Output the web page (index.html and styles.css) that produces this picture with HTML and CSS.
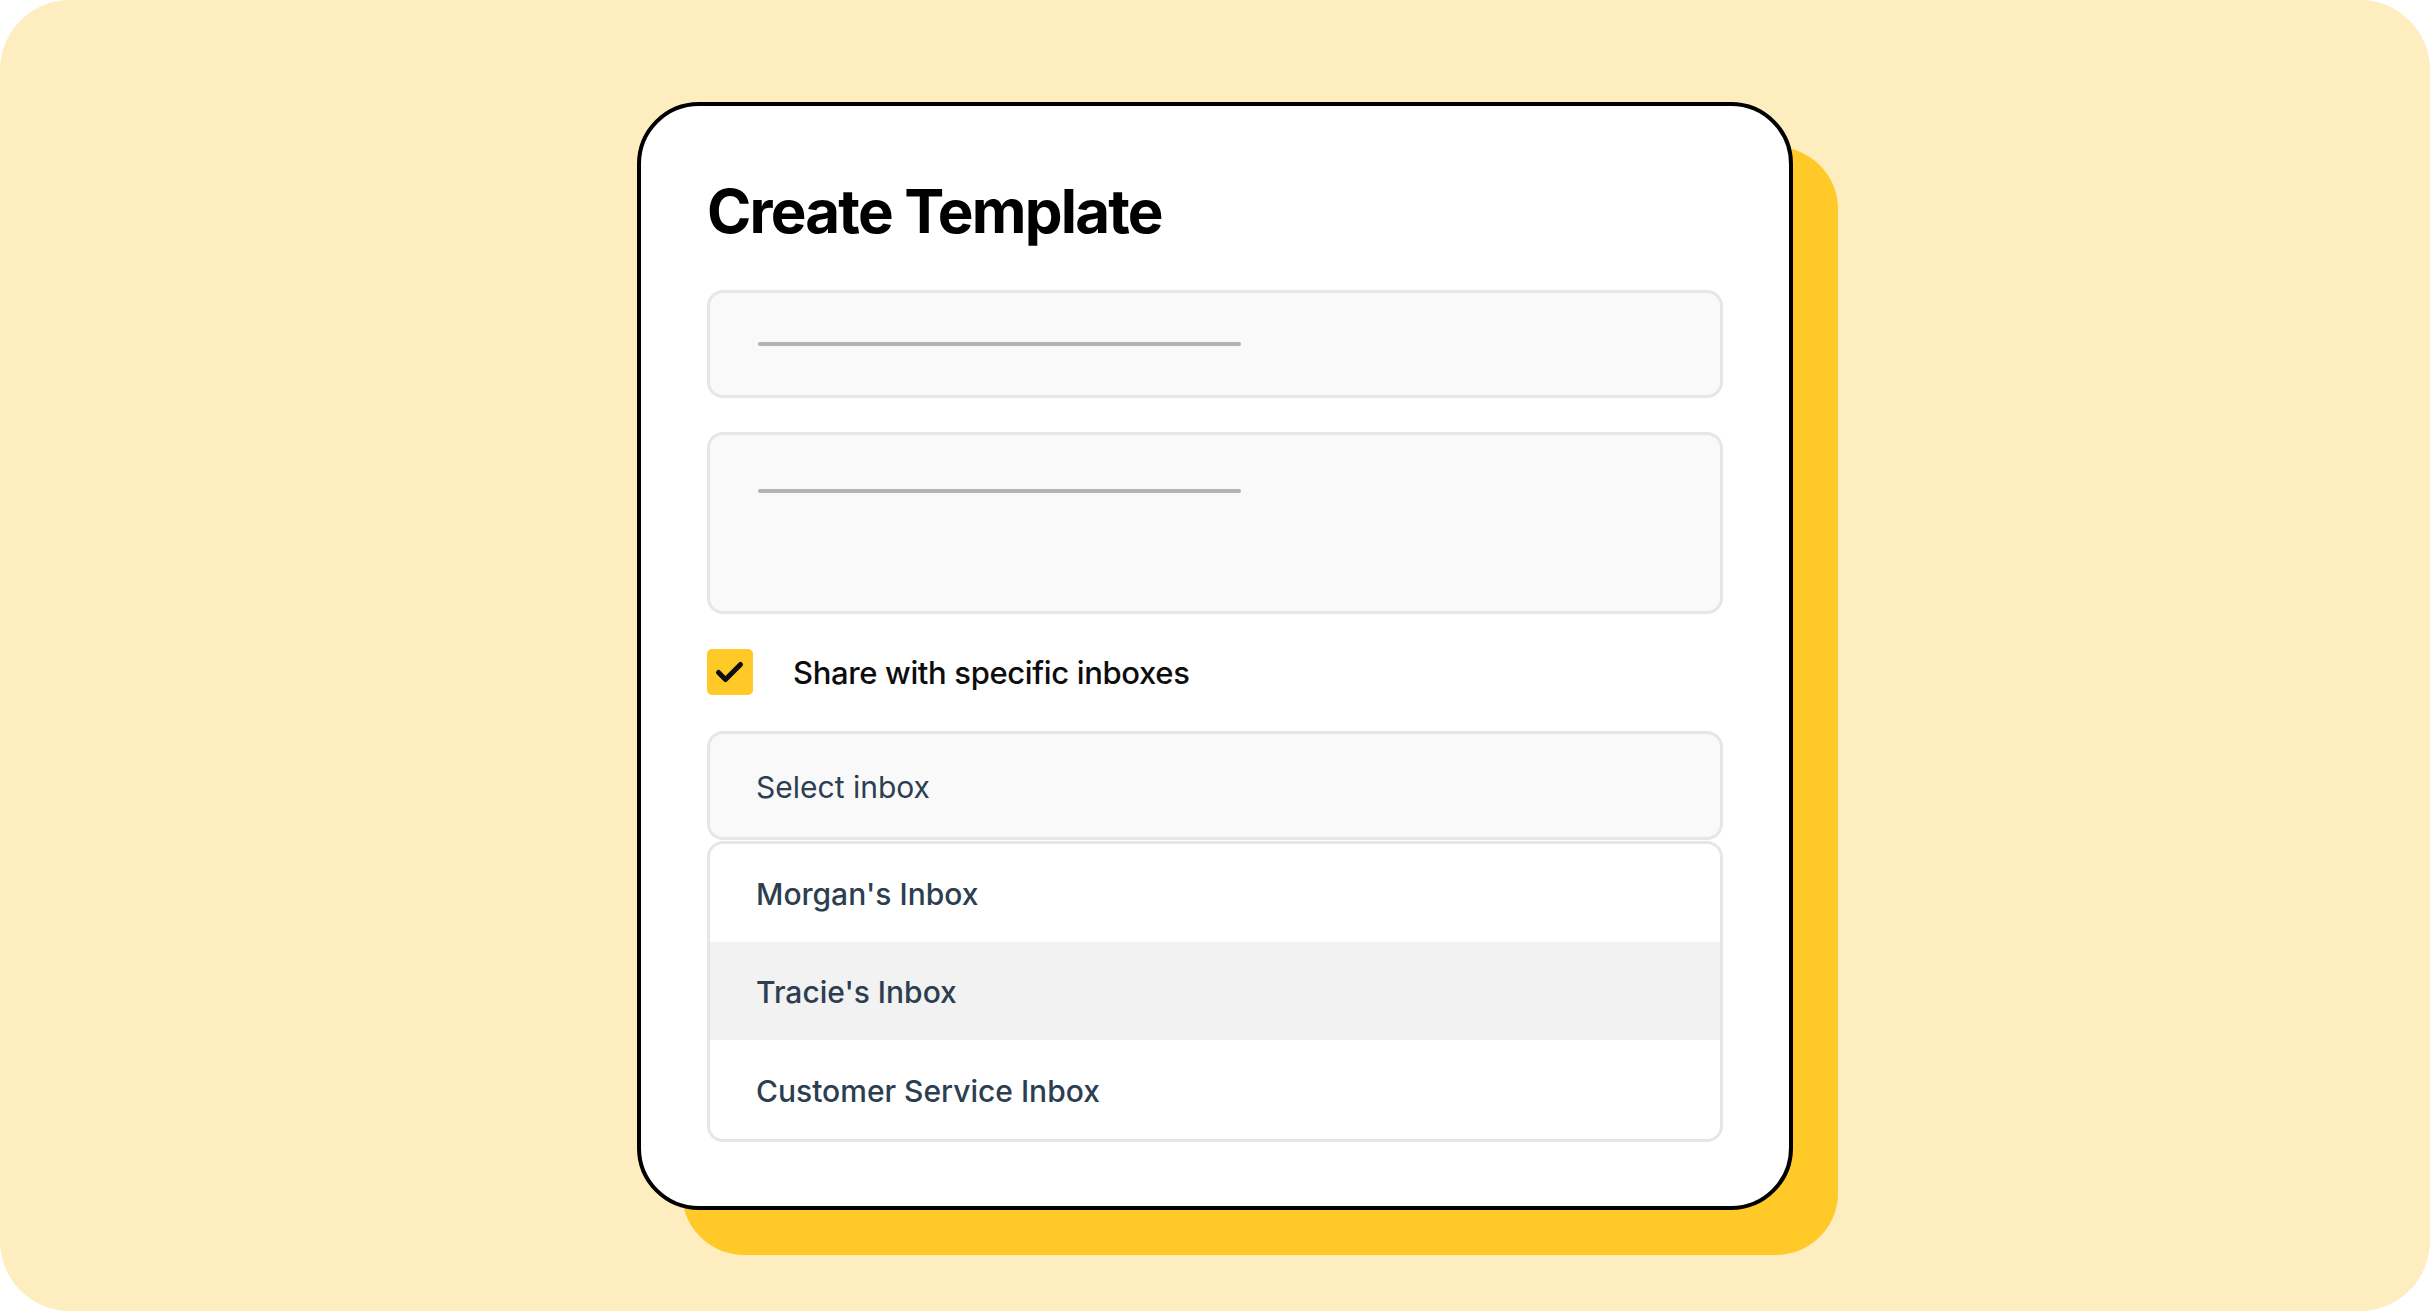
FILE: index.html
```html
<!DOCTYPE html>
<html lang="en">
<head>
    <meta charset="UTF-8">
    <meta name="viewport" content="width=device-width, initial-scale=1.0">
    <title>Create Template</title>
    <link rel="stylesheet" href="styles.css">
</head>
<body>

    <div class="canvas">
        <div class="template-card">
            <h1>Create Template</h1>

            <div class="field field-short">
                <span class="placeholder-line"></span>
            </div>

            <div class="field field-tall">
                <span class="placeholder-line"></span>
            </div>

            <label class="share-row">
                <span class="checkbox">
                    <svg viewBox="0 0 46 46" width="46" height="46">
                        <polyline points="11.5,23.5 18.5,30.5 33.5,15.5" fill="none" stroke="#0d0d0d" stroke-width="5" stroke-linecap="round" stroke-linejoin="round"/>
                    </svg>
                </span>
                Share with specific inboxes
            </label>

            <div class="select-box">Select inbox</div>

            <ul class="inbox-list">
                <li>Morgan's Inbox</li>
                <li class="hover">Tracie's Inbox</li>
                <li>Customer Service Inbox</li>
            </ul>
        </div>
    </div>

</body>
</html>
```

FILE: styles.css
```css
* {
  box-sizing: border-box;
}

body {
  margin: 0;
  background-color: #fff;
  font-family: Inter, "Noto Sans", sans-serif;
}

.canvas {
  width: 2430px;
  height: 1311px;
  background-color: #feedbf;
  border-radius: 70px;
  display: flex;
  align-items: center;
  justify-content: center;
}

/* the white card with the yellow block behind it */
.template-card {
  width: 1156px;
  height: 1108px;
  padding: 69px 66px 64px;
  background-color: #fff;
  border: 4px solid #000;
  border-radius: 62px;
  box-shadow: 45px 45px 0 #ffc928;
  display: flex;
  flex-direction: column;
}

.template-card h1 {
  margin: 0 0 43px;
  font-size: 60px;
  line-height: 72px;
  font-weight: 700;
  letter-spacing: -1.8px;
  color: #000;
}

.field {
  background-color: #f9f9f9;
  border: 3px solid #e6e6e6;
  border-radius: 16px;
  padding: 0 48px;
}

.field-short {
  height: 108px;
  display: flex;
  align-items: center;
  margin-bottom: 34px;
}

.field-tall {
  height: 182px;
  padding-top: 54px;
  margin-bottom: 35px;
}

.placeholder-line {
  display: block;
  width: 483px;
  height: 4px;
  border-radius: 2px;
  background-color: #b3b3b3;
}

.share-row {
  display: flex;
  align-items: center;
  gap: 40px;
  height: 47px;
  margin-bottom: 35px;
  font-size: 31px;
  font-weight: 500;
  letter-spacing: -0.35px;
  color: #0d0d0d;
}

.checkbox {
  width: 46px;
  height: 46px;
  border-radius: 5px;
  background-color: #ffc928;
  display: flex;
}

.select-box {
  height: 109px;
  display: flex;
  align-items: center;
  padding: 4px 46px 0;
  background-color: #f9f9f9;
  border: 3px solid #e6e6e6;
  border-radius: 16px;
  margin-bottom: 1px;
  font-size: 30px;
  color: #2c3e50;
}

.inbox-list {
  list-style: none;
  margin: 0;
  padding: 0;
  height: 301px;
  border: 3px solid #e6e6e6;
  border-radius: 16px;
  overflow: hidden;
}

.inbox-list li {
  height: 98.3px;
  display: flex;
  align-items: center;
  padding: 3px 46px 0;
  font-size: 30px;
  font-weight: 500;
  color: #2c3e50;
}

.inbox-list li.hover {
  background-color: #f2f2f2;
}
```
